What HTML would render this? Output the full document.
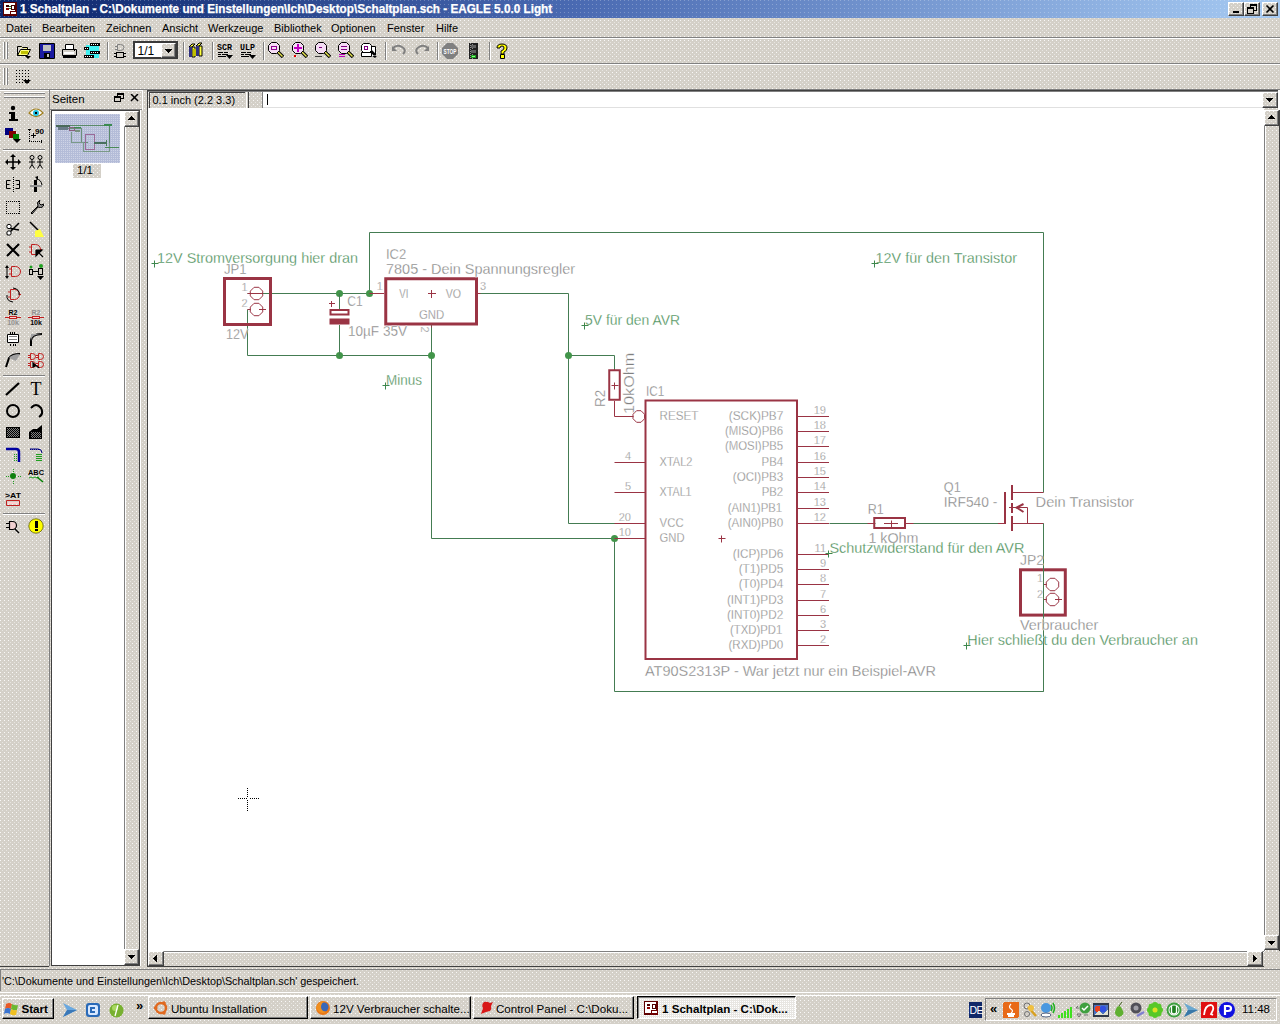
<!DOCTYPE html>
<html><head><meta charset="utf-8"><title>EAGLE</title>
<style>
*{margin:0;padding:0;box-sizing:border-box}
html,body{width:1280px;height:1024px;overflow:hidden;font-family:"Liberation Sans",sans-serif;font-size:11px;color:#000;position:relative}
body,.g,.btn{background-color:#d4d0c8;background-image:conic-gradient(from 270deg at 1px 1px,rgba(255,255,255,.85) 25%,transparent 0),conic-gradient(from 270deg at 1px 1px,rgba(255,255,255,.45) 25%,transparent 0);background-size:4px 4px,4px 4px;background-position:0 0,2px 2px}
.a{position:absolute}
.t{position:absolute;white-space:nowrap;line-height:1}
.btn{position:absolute;border-top:1px solid #fff;border-left:1px solid #fff;border-right:1px solid #404040;border-bottom:1px solid #404040;box-shadow:inset -1px -1px 0 #808080}
.sunk{position:absolute;border-top:1px solid #808080;border-left:1px solid #808080;border-right:1px solid #fff;border-bottom:1px solid #fff;box-shadow:inset 1px 1px 0 #404040}
</style></head><body>
<div class="a" style="left:0px;top:0px;width:1280px;height:18px;background:conic-gradient(from 270deg at 1px 1px,rgba(255,255,255,.25) 25%,transparent 0) 0 0/4px 4px,linear-gradient(to right,#0a246a 0%,#4a6ab2 45%,#a6caf2 100%);"></div><div class="t" style="left:20px;top:2.87px;font-size:12.2px;color:#fff;font-weight:bold;transform:scaleX(0.963);transform-origin:0 0;-webkit-text-stroke:0.25px #fff">1 Schaltplan - C:\Dokumente und Einstellungen\Ich\Desktop\Schaltplan.sch - EAGLE 5.0.0 Light</div><svg class="a" style="left:3px;top:2px" width="14" height="14" viewBox="0 0 14 14" shape-rendering="crispEdges"><rect x="0" y="0" width="14" height="14" fill="#5a0000"/><rect x="1" y="1" width="11" height="11" fill="#fff"/><rect x="3" y="3" width="3" height="2" fill="#400000"/><rect x="3" y="6" width="3" height="2" fill="#900000"/><rect x="6" y="4" width="2" height="1" fill="#2a7a2a"/><rect x="6" y="6" width="3" height="1" fill="#2a7a2a"/><rect x="8" y="3" width="4" height="5" fill="#400000"/><rect x="9" y="4" width="2" height="3" fill="#fff"/><rect x="7" y="9" width="7" height="5" fill="#600000"/><rect x="8" y="10" width="5" height="2" fill="#fff"/></svg><div class="btn" style="left:1228px;top:2px;width:16px;height:14px;"></div><div class="btn" style="left:1244px;top:2px;width:16px;height:14px;"></div><div class="btn" style="left:1262px;top:2px;width:16px;height:14px;"></div><svg class="a" style="left:1228px;top:2px" width="16" height="14" viewBox="0 0 16 14" shape-rendering="crispEdges"><rect x="5" y="9" width="6" height="2" fill="#000"/></svg><svg class="a" style="left:1244px;top:2px" width="16" height="14" viewBox="0 0 16 14" shape-rendering="crispEdges"><rect x="6" y="2" width="6" height="6" fill="none" stroke="#000" stroke-width="1" transform="translate(.5 .5)"/><rect x="6" y="2" width="6" height="1" fill="#000" transform="translate(.5 .5)"/><rect x="3.5" y="5.5" width="6" height="6" fill="#d4d0c8" stroke="#000"/><rect x="3" y="5" width="7" height="2" fill="#000"/></svg><svg class="a" style="left:1262px;top:2px" width="16" height="14" viewBox="0 0 16 14" shape-rendering="crispEdges"><path d="M4 3L11 10M11 3L4 10" stroke="#000" stroke-width="1.6" fill="none" shape-rendering="geometricPrecision" transform="translate(.5 .5)"/></svg><div class="t" style="left:6px;top:22.69px;font-size:11px;color:#000;">Datei</div><div class="t" style="left:42px;top:22.69px;font-size:11px;color:#000;">Bearbeiten</div><div class="t" style="left:106px;top:22.69px;font-size:11px;color:#000;">Zeichnen</div><div class="t" style="left:162px;top:22.69px;font-size:11px;color:#000;">Ansicht</div><div class="t" style="left:208px;top:22.69px;font-size:11px;color:#000;">Werkzeuge</div><div class="t" style="left:274px;top:22.69px;font-size:11px;color:#000;">Bibliothek</div><div class="t" style="left:331px;top:22.69px;font-size:11px;color:#000;">Optionen</div><div class="t" style="left:387px;top:22.69px;font-size:11px;color:#000;">Fenster</div><div class="t" style="left:436px;top:22.69px;font-size:11px;color:#000;">Hilfe</div><div class="a" style="left:0px;top:37px;width:1280px;height:1px;background:#808080;"></div><div class="a" style="left:0px;top:38px;width:1280px;height:1px;background:#fff;"></div><div class="a" style="left:0px;top:63px;width:1280px;height:1px;background:#808080;"></div><div class="a" style="left:0px;top:64px;width:1280px;height:1px;background:#fff;"></div><div class="a" style="left:0px;top:89px;width:1280px;height:1px;background:#808080;"></div><div class="a" style="left:3px;top:42px;width:1px;height:17px;background:#fff;"></div><div class="a" style="left:4px;top:42px;width:1px;height:17px;background:#808080;"></div><div class="a" style="left:6px;top:42px;width:1px;height:17px;background:#fff;"></div><div class="a" style="left:7px;top:42px;width:1px;height:17px;background:#808080;"></div><div class="a" style="left:3px;top:68px;width:1px;height:17px;background:#fff;"></div><div class="a" style="left:4px;top:68px;width:1px;height:17px;background:#808080;"></div><div class="a" style="left:6px;top:68px;width:1px;height:17px;background:#fff;"></div><div class="a" style="left:7px;top:68px;width:1px;height:17px;background:#808080;"></div><div class="a" style="left:107px;top:42px;width:1px;height:18px;background:#808080;"></div><div class="a" style="left:108px;top:42px;width:1px;height:18px;background:#fff;"></div><div class="a" style="left:183px;top:42px;width:1px;height:18px;background:#808080;"></div><div class="a" style="left:184px;top:42px;width:1px;height:18px;background:#fff;"></div><div class="a" style="left:212px;top:42px;width:1px;height:18px;background:#808080;"></div><div class="a" style="left:213px;top:42px;width:1px;height:18px;background:#fff;"></div><div class="a" style="left:263px;top:42px;width:1px;height:18px;background:#808080;"></div><div class="a" style="left:264px;top:42px;width:1px;height:18px;background:#fff;"></div><div class="a" style="left:385px;top:42px;width:1px;height:18px;background:#808080;"></div><div class="a" style="left:386px;top:42px;width:1px;height:18px;background:#fff;"></div><div class="a" style="left:437px;top:42px;width:1px;height:18px;background:#808080;"></div><div class="a" style="left:438px;top:42px;width:1px;height:18px;background:#fff;"></div><div class="a" style="left:489px;top:42px;width:1px;height:18px;background:#808080;"></div><div class="a" style="left:490px;top:42px;width:1px;height:18px;background:#fff;"></div><div class="a" style="left:133px;top:41px;width:45px;height:18px;background:#fff;border:2px solid #3a3a3a"></div><div class="btn" style="left:161px;top:43px;width:15px;height:15px;"></div><div class="t" style="left:137.5px;top:44.84px;font-size:12px;color:#000;">1/1</div><svg class="a" style="left:161px;top:43px" width="15" height="15" viewBox="0 0 15 15" shape-rendering="crispEdges"><path d="M4 6h7l-3.5 4z" fill="#000"/></svg>
<div class="a" style="left:49px;top:90px;width:1px;height:876px;background:#808080;"></div><div class="a" style="left:0px;top:90px;width:49px;height:1px;background:#fff;"></div><div class="a" style="left:4px;top:92px;width:41px;height:1px;background:#fff;"></div><div class="a" style="left:4px;top:93px;width:41px;height:1px;background:#808080;"></div><div class="a" style="left:4px;top:96px;width:41px;height:1px;background:#fff;"></div><div class="a" style="left:4px;top:97px;width:41px;height:1px;background:#808080;"></div><div class="a" style="left:3px;top:149px;width:42px;height:1px;background:#808080;"></div><div class="a" style="left:3px;top:150px;width:42px;height:1px;background:#fff;"></div><div class="a" style="left:3px;top:375px;width:42px;height:1px;background:#808080;"></div><div class="a" style="left:3px;top:376px;width:42px;height:1px;background:#fff;"></div><div class="a" style="left:3px;top:513px;width:42px;height:1px;background:#808080;"></div><div class="a" style="left:3px;top:514px;width:42px;height:1px;background:#fff;"></div><div class="a" style="left:50px;top:90px;width:93px;height:1px;background:#fff;"></div><div class="a" style="left:142px;top:90px;width:1px;height:20px;background:#fff;"></div><div class="t" style="left:52px;top:93.77px;font-size:11.5px;color:#000;">Seiten</div><svg class="a" style="left:114px;top:93px" width="10" height="10" viewBox="0 0 10 10" shape-rendering="crispEdges"><rect x="3.5" y="0.5" width="6" height="5" fill="none" stroke="#000"/><rect x="3" y="0" width="7" height="2" fill="#000"/><rect x="0.5" y="3.5" width="6" height="5" fill="#d4d0c8" stroke="#000"/><rect x="0" y="3" width="7" height="2" fill="#000"/></svg><svg class="a" style="left:130px;top:94px" width="9" height="8" viewBox="0 0 9 8" shape-rendering="crispEdges"><path d="M1 0L8 7M8 0L1 7" stroke="#000" stroke-width="1.5" shape-rendering="geometricPrecision"/></svg><div class="a" style="left:50px;top:109px;width:92px;height:1px;background:#808080;"></div><div class="a" style="left:51px;top:110px;width:89px;height:856px;background:#404040;"></div><div class="a" style="left:52px;top:111px;width:87px;height:854px;background:#fff;"></div><div class="a" style="left:140px;top:110px;width:1px;height:856px;background:#fff;"></div><div class="a" style="left:55px;top:114px;width:65px;height:49px;background:#b4bcd8;background-image:conic-gradient(from 270deg at 1px 1px,rgba(255,255,255,.35) 25%,transparent 0);background-size:2px 2px"></div><svg class="a" style="left:55px;top:114px" width="65" height="49" viewBox="0 0 65 49" shape-rendering="crispEdges"><g fill="none" stroke-width="1"><path d="M13.5 11.5h41v17" stroke="#5a8a6a"/><path d="M5 14.5h15M20 14.5h6.5v14h6" stroke="#6a9078"/><path d="M14.5 13.5h5v3h-5z" stroke="#8a6080"/><path d="M16.5 17.5v11h12v9h26v-9" stroke="#7a9a88"/><path d="M30.5 20.5h9v15h-9z" stroke="#9a6a98"/><path d="M39 28.5h12" stroke="#4a7060" stroke-width="2"/><path d="M51.5 26v6M54 33h10" stroke="#4a7a5a"/></g><rect x="1" y="11" width="14" height="2" fill="#4a6a5a"/><rect x="3" y="13" width="10" height="3" fill="#6a7a88"/><rect x="49" y="10" width="8" height="2" fill="#3a8a50"/><rect x="19" y="13" width="7" height="1" fill="#3a8a50"/><rect x="20" y="16" width="5" height="2" fill="#7a9080"/><rect x="50" y="33" width="14" height="1" fill="#4a8a58"/></svg><div class="a g" style="left:73px;top:164px;width:28px;height:14px;"></div><div class="t" style="left:77px;top:165.27px;font-size:11.5px;color:#000;">1/1</div><div class="a g" style="left:124px;top:111px;width:15px;height:854px;"></div><div class="a" style="left:124px;top:111px;width:1px;height:854px;background:#808080;"></div><div class="a" style="left:125px;top:111px;width:1px;height:854px;background:#fff;"></div><div class="btn" style="left:124px;top:111px;width:15px;height:16px;"></div><div class="btn" style="left:124px;top:949px;width:15px;height:16px;"></div><svg class="a" style="left:124px;top:111px" width="15" height="16" viewBox="0 0 15 16" shape-rendering="crispEdges"><path d="M4 9h7l-3.5-4z" fill="#000"/></svg><svg class="a" style="left:124px;top:949px" width="15" height="16" viewBox="0 0 15 16" shape-rendering="crispEdges"><path d="M4 6h7l-3.5 4z" fill="#000"/></svg><div class="a" style="left:147px;top:90px;width:1px;height:877px;background:#404040;"></div><div class="a" style="left:147px;top:90px;width:1133px;height:1px;background:#404040;"></div><div class="a" style="left:148px;top:91px;width:1132px;height:1px;background:#808080;"></div><div class="a g" style="left:149px;top:92px;width:96px;height:16px;border-left:1px solid #404040;border-top:1px solid #404040;"></div><div class="t" style="left:152.5px;top:94.69px;font-size:11px;color:#000;">0.1 inch (2.2 3.3)</div><div class="a" style="left:246px;top:92px;width:1px;height:16px;background:#fff;"></div><div class="a g" style="left:248px;top:92px;width:14px;height:16px;border-left:1px solid #404040;"></div><div class="a" style="left:262px;top:92px;width:1px;height:16px;background:#808080;"></div><div class="a" style="left:263px;top:92px;width:1000px;height:16px;background:#fff;"></div><div class="a" style="left:267px;top:94px;width:1px;height:11px;background:#000;"></div><div class="a" style="left:263px;top:107px;width:1000px;height:1px;background:#e0e0e0;"></div><div class="btn" style="left:1262px;top:92px;width:16px;height:16px;"></div><svg class="a" style="left:1262px;top:92px" width="16" height="16" viewBox="0 0 16 16" shape-rendering="crispEdges"><path d="M4 6h7l-3.5 4z" fill="#000"/></svg><div class="a" style="left:1278px;top:90px;width:2px;height:20px;background:#fff;"></div><div class="a" style="left:148px;top:108px;width:1116px;height:843px;background:#fff;"></div><div class="a g" style="left:1264px;top:110px;width:15px;height:841px;"></div><div class="a" style="left:1264px;top:110px;width:1px;height:841px;background:#808080;"></div><div class="a" style="left:1265px;top:110px;width:1px;height:841px;background:#fff;"></div><div class="a" style="left:1279px;top:110px;width:1px;height:857px;background:#404040;"></div><div class="btn" style="left:1264px;top:110px;width:15px;height:16px;"></div><div class="btn" style="left:1264px;top:935px;width:15px;height:15px;"></div><svg class="a" style="left:1264px;top:110px" width="15" height="16" viewBox="0 0 15 16" shape-rendering="crispEdges"><path d="M4 9h7l-3.5-4z" fill="#000"/></svg><svg class="a" style="left:1264px;top:935px" width="15" height="15" viewBox="0 0 15 15" shape-rendering="crispEdges"><path d="M4 6h7l-3.5 4z" fill="#000"/></svg><div class="a g" style="left:148px;top:951px;width:1116px;height:15px;"></div><div class="a" style="left:148px;top:951px;width:1116px;height:1px;background:#808080;"></div><div class="a" style="left:148px;top:952px;width:1116px;height:1px;background:#fff;"></div><div class="a" style="left:147px;top:966px;width:1117px;height:1px;background:#404040;"></div><div class="btn" style="left:148px;top:951px;width:16px;height:15px;"></div><div class="btn" style="left:1247px;top:951px;width:16px;height:15px;"></div><svg class="a" style="left:148px;top:951px" width="16" height="15" viewBox="0 0 16 15" shape-rendering="crispEdges"><path d="M9 4v7l-4-3.5z" fill="#000"/></svg><svg class="a" style="left:1247px;top:951px" width="16" height="15" viewBox="0 0 16 15" shape-rendering="crispEdges"><path d="M6 4v7l4-3.5z" fill="#000"/></svg><div class="a g" style="left:1264px;top:951px;width:16px;height:16px;"></div><div class="a" style="left:0px;top:966px;width:49px;height:1px;background:#404040;"></div><div class="a" style="left:0px;top:969px;width:1280px;height:1px;background:#808080;"></div><div class="a" style="left:0px;top:970px;width:1px;height:21px;background:#808080;"></div><div class="a" style="left:0px;top:992px;width:1280px;height:1px;background:#fff;"></div><div class="t" style="left:2px;top:976.36px;font-size:10.8px;color:#000;">'C:\Dokumente und Einstellungen\Ich\Desktop\Schaltplan.sch' gespeichert.</div><div class="a" style="left:0px;top:995px;width:1280px;height:1px;background:#fff;"></div>
<div class="btn" style="left:2px;top:998px;width:52px;height:21px;border-right-color:#000;border-bottom-color:#000"></div><div class="t" style="left:21.5px;top:1002.98px;font-size:11.6px;color:#000;font-weight:bold;">Start</div><svg class="a" style="left:4px;top:1001px" width="16" height="15" viewBox="0 0 16 15" shape-rendering="crispEdges"><g shape-rendering="geometricPrecision"><path d="M2 3q3-2 6 0l-1 5q-3-2-6 0z" fill="#e85a28"/><path d="M8 3q3 2 6 1l-1 5q-3 1-6-1z" fill="#6ab830"/><path d="M1 8q3-2 6 0l-1 5q-3-2-6 0z" fill="#3a74d0"/><path d="M7 8q3 2 6 1l-1 5q-3 1-6-1z" fill="#f0c020"/></g></svg><svg class="a" style="left:62px;top:1002px" width="16" height="16" viewBox="0 0 16 16" shape-rendering="crispEdges"><g shape-rendering="geometricPrecision"><path d="M1 1l14 7-14 7 4-7z" fill="#6aa8e0"/><path d="M5 8h10l-14 7z" fill="#3a78b8"/></g></svg><svg class="a" style="left:85px;top:1002px" width="16" height="16" viewBox="0 0 16 16" shape-rendering="crispEdges"><g shape-rendering="geometricPrecision"><rect x="1" y="1" width="14" height="14" rx="3" fill="#2a6ab8"/><rect x="3" y="3" width="10" height="10" rx="2" fill="#d8e8ff"/><path d="M5 5h5v2h-3v2h3v2h-5z" fill="#2a6ab8"/></g></svg><svg class="a" style="left:109px;top:1003px" width="15" height="15" viewBox="0 0 15 15" shape-rendering="crispEdges"><g shape-rendering="geometricPrecision"><circle cx="7.5" cy="7.5" r="7" fill="#78b030"/><circle cx="6" cy="5" r="3" fill="#a8d860"/><path d="M9 2l-3 11" stroke="#fff" stroke-width="1.3"/></g></svg><div class="t" style="left:136px;top:998.50px;font-size:13px;color:#000;font-weight:bold;">»</div><div class="btn" style="left:148px;top:996px;width:160px;height:23px;border-right-color:#000;border-bottom-color:#000"></div><div class="t" style="left:171px;top:1002.98px;font-size:11.6px;color:#000;">Ubuntu Installation</div><svg class="a" style="left:153px;top:1000px" width="16" height="16" viewBox="0 0 16 16" shape-rendering="crispEdges"><g shape-rendering="geometricPrecision"><circle cx="8" cy="8" r="5" fill="none" stroke="#e06a20" stroke-width="2.5"/><circle cx="2.5" cy="8" r="1.8" fill="#e06a20"/><circle cx="11" cy="3" r="1.8" fill="#e06a20"/><circle cx="11" cy="13" r="1.8" fill="#e06a20"/></g></svg><div class="btn" style="left:310px;top:996px;width:161px;height:23px;border-right-color:#000;border-bottom-color:#000"></div><div class="t" style="left:333px;top:1002.98px;font-size:11.6px;color:#000;">12V Verbraucher schalte...</div><svg class="a" style="left:315px;top:1000px" width="16" height="16" viewBox="0 0 16 16" shape-rendering="crispEdges"><g shape-rendering="geometricPrecision"><circle cx="8" cy="8" r="7" fill="#e87818"/><circle cx="9" cy="7" r="4.5" fill="#3a68b8"/><path d="M1 8q2-7 9-7q-4 2-4 6t5 5q-6 3-10-4z" fill="#f09020"/></g></svg><div class="btn" style="left:473px;top:996px;width:161px;height:23px;border-right-color:#000;border-bottom-color:#000"></div><div class="t" style="left:496px;top:1002.98px;font-size:11.6px;color:#000;">Control Panel - C:\Doku...</div><svg class="a" style="left:478px;top:1000px" width="16" height="16" viewBox="0 0 16 16" shape-rendering="crispEdges"><g shape-rendering="geometricPrecision"><path d="M3 14l2-6q-2-3 1-6q3-1 6 1l3-1-2 4q1 3-1 5l-4 1z" fill="#d81818"/></g></svg><div class="a" style="left:637px;top:996px;width:159px;height:23px;background:#e8e6e2;border-top:1px solid #000;border-left:1px solid #000;border-right:1px solid #fff;border-bottom:1px solid #fff;box-shadow:inset 1px 1px 0 #808080;background-image:conic-gradient(from 270deg at 1px 1px,#fff 25%,transparent 0);background-size:2px 2px"></div><div class="t" style="left:662px;top:1002.98px;font-size:11.6px;color:#000;font-weight:bold;">1 Schaltplan - C:\Dok...</div><svg class="a" style="left:643px;top:1000px" width="16" height="16" viewBox="0 0 16 16" shape-rendering="crispEdges"><rect x="1" y="1" width="14" height="14" fill="#600000"/><rect x="2" y="2" width="11" height="11" fill="#fff"/><rect x="4" y="4" width="3" height="2" fill="#500000"/><rect x="4" y="7" width="3" height="2" fill="#900000"/><rect x="9" y="4" width="4" height="5" fill="#500000"/><rect x="10" y="5" width="2" height="3" fill="#fff"/><rect x="8" y="10" width="7" height="5" fill="#700000"/><rect x="9" y="11" width="5" height="2" fill="#fff"/></svg><div class="a" style="left:969px;top:1002px;width:13px;height:16px;background:#102868;"></div><div class="t" style="left:969.5px;top:1005.11px;font-size:10.5px;color:#fff;letter-spacing:-0.6px;">DE</div><div class="a g" style="left:985px;top:998px;width:292px;height:23px;border-top:1px solid #808080;border-left:1px solid #808080;border-right:1px solid #fff;border-bottom:1px solid #fff"></div><div class="t" style="left:990px;top:1001.50px;font-size:13px;color:#000;font-weight:bold;">«</div><svg class="a" style="left:1003px;top:1002px" width="16" height="16" viewBox="0 0 16 16" shape-rendering="crispEdges"><rect x="0" y="0" width="16" height="16" rx="2" fill="#e86a18"/><path d="M4 12h8M5 14h6" stroke="#fff" stroke-width="1.2"/><path d="M8 2q-3 3 0 5t0 4" stroke="#fff" stroke-width="1.2" fill="none" shape-rendering="geometricPrecision"/></svg><svg class="a" style="left:1022px;top:1002px" width="16" height="16" viewBox="0 0 16 16" shape-rendering="crispEdges"><g shape-rendering="geometricPrecision"><circle cx="5" cy="4" r="3" fill="none" stroke="#707070"/><circle cx="5" cy="12" r="2.5" fill="none" stroke="#707070"/><path d="M6 5l8 9" stroke="#d8a020" stroke-width="2.5"/><circle cx="9" cy="6" r="3" fill="#f0c040"/></g></svg><svg class="a" style="left:1040px;top:1002px" width="16" height="16" viewBox="0 0 16 16" shape-rendering="crispEdges"><g shape-rendering="geometricPrecision"><circle cx="6" cy="6" r="5" fill="#4a98e0"/><ellipse cx="6" cy="13" rx="5" ry="2" fill="#fff" stroke="#506080"/><path d="M11 3q2 3 0 6M13 1q3 5 0 10" stroke="#20b020" stroke-width="1.5" fill="none"/></g></svg><svg class="a" style="left:1057px;top:1002px" width="16" height="16" viewBox="0 0 16 16" shape-rendering="crispEdges"><rect x="1" y="13" width="2" height="3" fill="#40e020"/><rect x="4" y="11" width="2" height="5" fill="#40e020"/><rect x="7" y="9" width="2" height="7" fill="#40e020"/><rect x="10" y="7" width="2" height="9" fill="#40e020"/><rect x="13" y="5" width="2" height="11" fill="#40e020"/></svg><svg class="a" style="left:1075px;top:1002px" width="16" height="16" viewBox="0 0 16 16" shape-rendering="crispEdges"><g shape-rendering="geometricPrecision"><circle cx="10" cy="6" r="5.5" fill="#40a040"/><path d="M7 6l2 2 4-4" stroke="#fff" stroke-width="1.5" fill="none"/><path d="M1 6h3M1 6l2-2M2 12h4l-2 3zM9 13h4" stroke="#707070" fill="none"/></g></svg><svg class="a" style="left:1093px;top:1002px" width="16" height="16" viewBox="0 0 16 16" shape-rendering="crispEdges"><rect x="0" y="1" width="16" height="14" fill="#303848"/><rect x="1" y="3" width="14" height="10" fill="#4a70c0"/><circle cx="5" cy="7" r="3" fill="#e84020"/><circle cx="10" cy="7" r="3" fill="#3050e0"/><path d="M1 13l5-4 4 3 5-4v5z" fill="#e0e0d0"/></svg><svg class="a" style="left:1113px;top:1002px" width="16" height="16" viewBox="0 0 16 16" shape-rendering="crispEdges"><g shape-rendering="geometricPrecision"><path d="M6 15q-6-2-3-8q1-3 3-3q2 0 3 3q4 6-3 8z" fill="#60b030"/><path d="M6 4l3-4" stroke="#406020"/></g></svg><svg class="a" style="left:1129px;top:1002px" width="16" height="16" viewBox="0 0 16 16" shape-rendering="crispEdges"><g shape-rendering="geometricPrecision"><circle cx="7" cy="6" r="5.5" fill="#505058"/><circle cx="7" cy="6" r="2.5" fill="#a0a0a8"/><path d="M8 14l7-4" stroke="#8080d0" stroke-width="2.5"/></g></svg><svg class="a" style="left:1147px;top:1002px" width="16" height="16" viewBox="0 0 16 16" shape-rendering="crispEdges"><g shape-rendering="geometricPrecision"><circle cx="13.0" cy="8.0" r="3" fill="#58c828"/><circle cx="11.5" cy="11.5" r="3" fill="#58c828"/><circle cx="8.0" cy="13.0" r="3" fill="#58c828"/><circle cx="4.5" cy="11.5" r="3" fill="#58c828"/><circle cx="3.0" cy="8.0" r="3" fill="#58c828"/><circle cx="4.5" cy="4.5" r="3" fill="#58c828"/><circle cx="8.0" cy="3.0" r="3" fill="#58c828"/><circle cx="11.5" cy="4.5" r="3" fill="#58c828"/><circle cx="8" cy="8" r="2.5" fill="#e0e020"/></g></svg><svg class="a" style="left:1166px;top:1002px" width="16" height="16" viewBox="0 0 16 16" shape-rendering="crispEdges"><g shape-rendering="geometricPrecision"><circle cx="8" cy="8" r="7.5" fill="#40a040"/><circle cx="8" cy="8" r="5.5" fill="#fff"/><circle cx="8" cy="8" r="4.5" fill="#208020"/><path d="M5.5 4v6q0 2 2.5 2t2.5-2v-6" stroke="#fff" stroke-width="1.3" fill="none"/></g></svg><svg class="a" style="left:1183px;top:1002px" width="16" height="16" viewBox="0 0 16 16" shape-rendering="crispEdges"><g shape-rendering="geometricPrecision"><path d="M1 1l14 7-14 7 4-7z" fill="#6aa8d0"/><path d="M5 8h10l-14 7z" fill="#3a78a8"/></g></svg><svg class="a" style="left:1201px;top:1002px" width="16" height="16" viewBox="0 0 16 16" shape-rendering="crispEdges"><rect x="0" y="0" width="16" height="16" fill="#e01010"/><path d="M3 13q1-10 7-10q3 1 2 5l-2 4 2 1" stroke="#fff" stroke-width="1.8" fill="none" shape-rendering="geometricPrecision"/></svg><svg class="a" style="left:1219px;top:1002px" width="16" height="16" viewBox="0 0 16 16" shape-rendering="crispEdges"><g shape-rendering="geometricPrecision"><circle cx="8" cy="8" r="8" fill="#1010e0"/><path d="M6 13V4h3q3 0 3 2.5t-3 2.5h-3" stroke="#fff" stroke-width="2.2" fill="none"/></g></svg><div class="t" style="left:1242px;top:1004.07px;font-size:11.5px;color:#000;">11:48</div>
<svg class="a" style="left:16px;top:43px" width="16" height="16" viewBox="0 0 16 16" font-family="Liberation Sans, sans-serif"><path d="M1.5 3.5h4l1 1h5v2" fill="#ffff80" stroke="#000" stroke-width="1" /><path d="M1.5 3.5v9h10l3-6h-10l-3 6" fill="#ffff80" stroke="#000" stroke-width="1" /><rect x="5" y="8" width="7" height="3" fill="#c0c000"/><path d="M9 13h6l-3 3z" fill="#000" stroke="none" stroke-width="1" /></svg><svg class="a" style="left:39px;top:43px" width="16" height="16" viewBox="0 0 16 16" font-family="Liberation Sans, sans-serif"><rect x="1" y="1" width="14" height="14" fill="#1a1aa0"/><rect x="4" y="2" width="8" height="6" fill="#c0c0c0"/><rect x="5" y="10" width="6" height="5" fill="#000"/><rect x="8" y="11" width="2" height="3" fill="#c0c0c0"/><path d="M0.5 0.5h15v15h-15z" fill="none" stroke="#000" stroke-width="1" /></svg><svg class="a" style="left:61px;top:43px" width="16" height="16" viewBox="0 0 16 16" font-family="Liberation Sans, sans-serif"><rect x="4" y="1" width="9" height="5" fill="#fff"/><path d="M4.5 1.5h8v5h-8z" fill="none" stroke="#000" stroke-width="1" /><rect x="1" y="6" width="15" height="7" fill="#d4d0c8"/><path d="M1.5 6.5h14v6h-14z" fill="none" stroke="#000" stroke-width="1" /><rect x="3" y="9" width="10" height="2" fill="#fff"/><rect x="2" y="13" width="13" height="2" fill="#000"/><rect x="13" y="7" width="1" height="1" fill="#000"/></svg><svg class="a" style="left:84px;top:43px" width="16" height="16" viewBox="0 0 16 16" font-family="Liberation Sans, sans-serif"><rect x="2" y="2" width="13" height="13" fill="#40f0f0"/><rect x="6" y="0" width="10" height="3" fill="#000"/><rect x="0" y="4" width="5" height="3" fill="#000"/><rect x="6" y="8" width="10" height="3" fill="#000"/><rect x="0" y="12" width="10" height="3" fill="#000"/><rect x="7" y="1" width="1" height="1" fill="#fff"/><rect x="9" y="1" width="1" height="1" fill="#fff"/><rect x="11" y="1" width="1" height="1" fill="#fff"/><rect x="13" y="1" width="1" height="1" fill="#fff"/><rect x="7" y="9" width="1" height="1" fill="#fff"/><rect x="9" y="9" width="1" height="1" fill="#fff"/><rect x="11" y="9" width="1" height="1" fill="#fff"/><rect x="13" y="9" width="1" height="1" fill="#fff"/><rect x="1" y="5" width="1" height="1" fill="#fff"/><rect x="3" y="5" width="1" height="1" fill="#fff"/><rect x="1" y="13" width="1" height="1" fill="#fff"/><rect x="3" y="13" width="1" height="1" fill="#fff"/><rect x="5" y="13" width="1" height="1" fill="#fff"/><rect x="7" y="13" width="1" height="1" fill="#fff"/></svg><svg class="a" style="left:114px;top:43px" width="16" height="16" viewBox="0 0 16 16" font-family="Liberation Sans, sans-serif"><path d="M1 3.5h2M1 6.5h2M3.5 1.5h3a3.5 3 0 0 1 0 6h-3z" fill="none" stroke="#808080" stroke-width="1" shape-rendering="geometricPrecision"/><rect x="2" y="9" width="8" height="6" fill="#000"/><rect x="3" y="10" width="6" height="4" fill="#d4d0c8"/><rect x="0" y="10" width="2" height="1" fill="#000"/><rect x="0" y="13" width="2" height="1" fill="#000"/><rect x="10" y="10" width="2" height="1" fill="#000"/><rect x="10" y="13" width="2" height="1" fill="#000"/></svg><svg class="a" style="left:188px;top:42px" width="16" height="16" viewBox="0 0 16 16" font-family="Liberation Sans, sans-serif"><path d="M1 5l3-3h3l-3 3zM4 5h3v10h-3z" fill="#ffff40" stroke="#000" stroke-width="1" /><rect x="1" y="5" width="3" height="10" fill="#303080"/><path d="M8 4l3-3h3l-3 3zM11 4h3v10h-3z" fill="#ffff40" stroke="#000" stroke-width="1" /><rect x="8" y="4" width="3" height="10" fill="#303080"/><rect x="5" y="7" width="3" height="7" fill="#c0c000"/></svg><svg class="a" style="left:217px;top:43px" width="16" height="16" viewBox="0 0 16 16" font-family="Liberation Sans, sans-serif"><text x="0" y="7" font-family="Liberation Mono" font-weight="bold" font-size="8.5" textLength="15" lengthAdjust="spacingAndGlyphs">SCR</text><rect x="1" y="9" width="5" height="1" fill="#000"/><rect x="7" y="9" width="4" height="1" fill="#000"/><rect x="1" y="11" width="3" height="1" fill="#000"/><rect x="5" y="11" width="6" height="1" fill="#000"/><rect x="1" y="13" width="8" height="1" fill="#000"/><path d="M9 12h7l-3.5 4z" fill="#000" stroke="none" stroke-width="1" /></svg><svg class="a" style="left:240px;top:43px" width="16" height="16" viewBox="0 0 16 16" font-family="Liberation Sans, sans-serif"><text x="0" y="7" font-family="Liberation Mono" font-weight="bold" font-size="8.5" textLength="15" lengthAdjust="spacingAndGlyphs">ULP</text><rect x="1" y="9" width="5" height="1" fill="#000"/><rect x="7" y="9" width="4" height="1" fill="#000"/><rect x="1" y="11" width="3" height="1" fill="#000"/><rect x="5" y="11" width="6" height="1" fill="#000"/><rect x="1" y="13" width="8" height="1" fill="#000"/><path d="M9 12h7l-3.5 4z" fill="#000" stroke="none" stroke-width="1" /></svg><svg class="a" style="left:268px;top:42px" width="16" height="16" viewBox="0 0 16 16" font-family="Liberation Sans, sans-serif"><path d="M9.5 9.5l5.5 5.5" fill="#000" stroke="#000" stroke-width="3.4" shape-rendering="geometricPrecision"/><path d="M9.5 9.5l5 5" fill="none" stroke="#e8e850" stroke-width="1.4" shape-rendering="geometricPrecision"/><path d="M3.5 0.5h5l3 3v5l-3 3h-5l-3-3v-5z" fill="#f4dcf4" stroke="#000" stroke-width="1" /><rect x="3" y="4" width="6" height="4" fill="#900090"/><rect x="4" y="5" width="4" height="2" fill="#f4dcf4"/></svg><svg class="a" style="left:292px;top:42px" width="16" height="16" viewBox="0 0 16 16" font-family="Liberation Sans, sans-serif"><path d="M9.5 9.5l5.5 5.5" fill="#000" stroke="#000" stroke-width="3.4" shape-rendering="geometricPrecision"/><path d="M9.5 9.5l5 5" fill="none" stroke="#e8e850" stroke-width="1.4" shape-rendering="geometricPrecision"/><path d="M3.5 0.5h5l3 3v5l-3 3h-5l-3-3v-5z" fill="#f4dcf4" stroke="#000" stroke-width="1" /><rect x="5" y="2" width="2" height="8" fill="#c000c0"/><rect x="2" y="5" width="8" height="2" fill="#c000c0"/><rect x="2" y="13" width="2" height="2" fill="#e00000"/></svg><svg class="a" style="left:315px;top:42px" width="16" height="16" viewBox="0 0 16 16" font-family="Liberation Sans, sans-serif"><path d="M9.5 9.5l5.5 5.5" fill="#000" stroke="#000" stroke-width="3.4" shape-rendering="geometricPrecision"/><path d="M9.5 9.5l5 5" fill="none" stroke="#e8e850" stroke-width="1.4" shape-rendering="geometricPrecision"/><path d="M3.5 0.5h5l3 3v5l-3 3h-5l-3-3v-5z" fill="#f4dcf4" stroke="#000" stroke-width="1" /><rect x="4" y="5" width="3" height="1" fill="#800080"/><rect x="0" y="14" width="7" height="1" fill="#404040"/></svg><svg class="a" style="left:338px;top:42px" width="16" height="16" viewBox="0 0 16 16" font-family="Liberation Sans, sans-serif"><path d="M9.5 9.5l5.5 5.5" fill="#000" stroke="#000" stroke-width="3.4" shape-rendering="geometricPrecision"/><path d="M9.5 9.5l5 5" fill="none" stroke="#e8e850" stroke-width="1.4" shape-rendering="geometricPrecision"/><path d="M3.5 0.5h5l3 3v5l-3 3h-5l-3-3v-5z" fill="#f4dcf4" stroke="#000" stroke-width="1" /><rect x="3" y="4" width="6" height="1" fill="#800080"/><rect x="3" y="7" width="6" height="1" fill="#800080"/><rect x="1" y="12" width="6" height="1" fill="#c000c0"/><rect x="1" y="14" width="6" height="1" fill="#c000c0"/></svg><svg class="a" style="left:361px;top:42px" width="16" height="16" viewBox="0 0 16 16" font-family="Liberation Sans, sans-serif"><path d="M2.5 1.5h6l2 2v5l-2 2h-6l-2-2v-5z" fill="#fff" stroke="#000" stroke-width="1" /><rect x="3" y="4" width="4" height="4" fill="#800080"/><rect x="4" y="5" width="2" height="2" fill="#fff"/><rect x="1" y="11" width="9" height="3" fill="#fff"/><path d="M0.5 10.5h10v4h-10z" fill="none" stroke="#000" stroke-width="1" /><rect x="11" y="5" width="4" height="9" fill="#fff"/><path d="M10.5 4.5h4v9" fill="none" stroke="#000" stroke-width="1" /><path d="M10 9l4 4" fill="#000" stroke="#000" stroke-width="2.5" shape-rendering="geometricPrecision"/><path d="M11 14h5l-2 2z" fill="#000" stroke="none" stroke-width="1" /></svg><svg class="a" style="left:391px;top:43px" width="16" height="16" viewBox="0 0 16 16" font-family="Liberation Sans, sans-serif"><path d="M2 5q4-4 9-1t1 7" fill="none" stroke="#808080" stroke-width="2" shape-rendering="geometricPrecision"/><path d="M1 3v5h5z" fill="#808080" stroke="none" stroke-width="1" /></svg><svg class="a" style="left:414px;top:43px" width="16" height="16" viewBox="0 0 16 16" font-family="Liberation Sans, sans-serif"><path d="M14 5q-4-4-9-1t-1 7" fill="none" stroke="#808080" stroke-width="2" shape-rendering="geometricPrecision"/><path d="M15 3v5h-5z" fill="#808080" stroke="none" stroke-width="1" /></svg><svg class="a" style="left:442px;top:43px" width="16" height="16" viewBox="0 0 16 16" font-family="Liberation Sans, sans-serif"><path d="M5 0h6l5 5v6l-5 5h-6l-5-5v-6z" fill="#808080" stroke="none" stroke-width="1" /><text x="8" y="11" text-anchor="middle" font-weight="bold" font-size="7.5" fill="#fff" textLength="13" lengthAdjust="spacingAndGlyphs">STOP</text></svg><svg class="a" style="left:494px;top:43px" width="16" height="16" viewBox="0 0 16 16" font-family="Liberation Sans, sans-serif"><path d="M3 5q0-4 5-4t5 4q0 3-3 4v2h-3v-3q3-1 3-3t-2-2t-2 2z" fill="#ffff00" stroke="#000" stroke-width="1" shape-rendering="geometricPrecision"/><rect x="7" y="12" width="3" height="3" fill="#ffff00"/><path d="M6.5 11.5h4v4h-4z" fill="none" stroke="#000" stroke-width="1" /></svg><svg class="a" style="left:469px;top:43px" width="9" height="16"><rect x="0" y="0" width="9" height="16" fill="#202020"/><rect x="1" y="0" width="1" height="1" fill="#909090"/><rect x="3" y="1" width="1" height="1" fill="#909090"/><rect x="1" y="2" width="1" height="1" fill="#909090"/><rect x="3" y="3" width="1" height="1" fill="#909090"/><rect x="1" y="4" width="1" height="1" fill="#909090"/><rect x="3" y="5" width="1" height="1" fill="#909090"/><rect x="1" y="6" width="1" height="1" fill="#909090"/><rect x="3" y="7" width="1" height="1" fill="#909090"/><rect x="1" y="8" width="1" height="1" fill="#909090"/><rect x="3" y="9" width="1" height="1" fill="#909090"/><rect x="1" y="10" width="1" height="1" fill="#909090"/><rect x="3" y="11" width="1" height="1" fill="#909090"/><rect x="1" y="12" width="1" height="1" fill="#909090"/><rect x="3" y="13" width="1" height="1" fill="#909090"/><rect x="1" y="14" width="1" height="1" fill="#909090"/><rect x="3" y="15" width="1" height="1" fill="#909090"/><rect x="2" y="2" width="5" height="3" fill="#606060"/><rect x="2" y="7" width="5" height="3" fill="#606060"/><rect x="2" y="12" width="5" height="3" fill="#20a020"/><rect x="3" y="13" width="3" height="1" fill="#80ff80"/></svg><svg class="a" style="left:15px;top:69px" width="16" height="16" viewBox="0 0 16 16" font-family="Liberation Sans, sans-serif"><rect x="1" y="1" width="1" height="1" fill="#000"/><rect x="1" y="4" width="1" height="1" fill="#000"/><rect x="1" y="7" width="1" height="1" fill="#000"/><rect x="1" y="10" width="1" height="1" fill="#000"/><rect x="1" y="13" width="1" height="1" fill="#000"/><rect x="4" y="1" width="1" height="1" fill="#000"/><rect x="4" y="4" width="1" height="1" fill="#000"/><rect x="4" y="7" width="1" height="1" fill="#000"/><rect x="4" y="10" width="1" height="1" fill="#000"/><rect x="4" y="13" width="1" height="1" fill="#000"/><rect x="7" y="1" width="1" height="1" fill="#000"/><rect x="7" y="4" width="1" height="1" fill="#000"/><rect x="7" y="7" width="1" height="1" fill="#000"/><rect x="7" y="10" width="1" height="1" fill="#000"/><rect x="7" y="13" width="1" height="1" fill="#000"/><rect x="10" y="1" width="1" height="1" fill="#000"/><rect x="10" y="4" width="1" height="1" fill="#000"/><rect x="10" y="7" width="1" height="1" fill="#000"/><rect x="10" y="10" width="1" height="1" fill="#000"/><rect x="10" y="13" width="1" height="1" fill="#000"/><rect x="13" y="1" width="1" height="1" fill="#000"/><rect x="13" y="4" width="1" height="1" fill="#000"/><rect x="13" y="7" width="1" height="1" fill="#000"/><rect x="13" y="10" width="1" height="1" fill="#000"/><rect x="13" y="13" width="1" height="1" fill="#000"/><path d="M8 11h8l-4 4z" fill="#000" stroke="none" stroke-width="1" /></svg><svg class="a" style="left:5px;top:105px" width="16" height="16" viewBox="0 0 16 16" font-family="Liberation Sans, sans-serif"><circle cx="8" cy="3" r="2.2" fill="#000"/><rect x="6" y="7" width="4" height="8" fill="#000"/><rect x="4" y="7" width="3" height="2" fill="#000"/><rect x="4" y="14" width="9" height="2" fill="#000"/></svg><svg class="a" style="left:28px;top:105px" width="16" height="16" viewBox="0 0 16 16" font-family="Liberation Sans, sans-serif"><path d="M1 8q7-8 14 0q-7 7-14 0z" fill="#fff" stroke="#a08020" stroke-width="1.2" shape-rendering="geometricPrecision"/><circle cx="8" cy="8" r="3" fill="#20c0e0"/><rect x="7" y="7" width="2" height="2" fill="#000"/></svg><svg class="a" style="left:5px;top:127px" width="16" height="16" viewBox="0 0 16 16" font-family="Liberation Sans, sans-serif"><rect x="0" y="1" width="8" height="7" fill="#000080"/><rect x="4" y="4" width="7" height="7" fill="#800000"/><rect x="8" y="7" width="6" height="5" fill="#008000"/><path d="M8 12h8l-4 4z" fill="#000" stroke="none" stroke-width="1" /></svg><svg class="a" style="left:28px;top:127px" width="16" height="16" viewBox="0 0 16 16" font-family="Liberation Sans, sans-serif"><rect x="1" y="3" width="1" height="1" fill="#000"/><rect x="1" y="5" width="1" height="1" fill="#000"/><rect x="1" y="7" width="1" height="1" fill="#000"/><rect x="1" y="9" width="1" height="1" fill="#000"/><rect x="1" y="11" width="1" height="1" fill="#000"/><rect x="1" y="13" width="1" height="1" fill="#000"/><rect x="0" y="2" width="3" height="1" fill="#000"/><rect x="1" y="14" width="1" height="1" fill="#000"/><rect x="3" y="14" width="1" height="1" fill="#000"/><rect x="5" y="14" width="1" height="1" fill="#000"/><rect x="7" y="14" width="1" height="1" fill="#000"/><rect x="9" y="14" width="1" height="1" fill="#000"/><rect x="11" y="14" width="1" height="1" fill="#000"/><rect x="13" y="14" width="1" height="1" fill="#000"/><rect x="13" y="13" width="1" height="3" fill="#000"/><rect x="5" y="6" width="1" height="5" fill="#000"/><rect x="3" y="8" width="5" height="1" fill="#000"/><text x="7" y="6.5" font-size="7" font-weight="bold" textLength="9" lengthAdjust="spacingAndGlyphs">90</text></svg><svg class="a" style="left:5px;top:154px" width="16" height="16" viewBox="0 0 16 16" font-family="Liberation Sans, sans-serif"><path d="M8 1v14M1 8h14" fill="#000" stroke="#000" stroke-width="1.6" /><path d="M8 0l-3 3h6zM8 16l-3-3h6zM0 8l3-3v6zM16 8l-3-3v6z" fill="#000" stroke="none" stroke-width="1" /></svg><svg class="a" style="left:28px;top:154px" width="16" height="16" viewBox="0 0 16 16" font-family="Liberation Sans, sans-serif"><circle cx="4" cy="3.5" r="2" fill="none" stroke="#000"/><path d="M4 5.5v5M1 8h6M4 10.5l-2.5 4M4 10.5l2.5 4" fill="none" stroke="#000" stroke-width="1" shape-rendering="geometricPrecision"/><circle cx="12" cy="3.5" r="2" fill="none" stroke="#000"/><path d="M12 5.5v5M9 8h6M12 10.5l-2.5 4M12 10.5l2.5 4" fill="none" stroke="#000" stroke-width="1" shape-rendering="geometricPrecision"/></svg><svg class="a" style="left:5px;top:176px" width="16" height="16" viewBox="0 0 16 16" font-family="Liberation Sans, sans-serif"><path d="M1.5 4.5h4M1.5 4.5v8h4M1.5 8.5h3M10.5 4.5h4v8h-4M11.5 8.5h3" fill="none" stroke="#000" stroke-width="1" /><rect x="8" y="1" width="1" height="1" fill="#000"/><rect x="8" y="3" width="1" height="1" fill="#000"/><rect x="8" y="5" width="1" height="1" fill="#000"/><rect x="8" y="7" width="1" height="1" fill="#000"/><rect x="8" y="9" width="1" height="1" fill="#000"/><rect x="8" y="11" width="1" height="1" fill="#000"/><rect x="8" y="13" width="1" height="1" fill="#000"/><rect x="8" y="15" width="1" height="1" fill="#000"/></svg><svg class="a" style="left:28px;top:176px" width="16" height="16" viewBox="0 0 16 16" font-family="Liberation Sans, sans-serif"><rect x="6" y="4" width="3" height="12" fill="#000"/><rect x="2" y="9" width="12" height="2" fill="#909090"/><path d="M8 3q5 0 6 6" fill="none" stroke="#000" stroke-width="1" shape-rendering="geometricPrecision"/><path d="M7 1l3-1v4z" fill="#000" stroke="none" stroke-width="1" /></svg><svg class="a" style="left:5px;top:199px" width="16" height="16" viewBox="0 0 16 16" font-family="Liberation Sans, sans-serif"><rect x="1" y="2" width="1" height="1" fill="#000"/><rect x="1" y="14" width="1" height="1" fill="#000"/><rect x="3" y="2" width="1" height="1" fill="#000"/><rect x="3" y="14" width="1" height="1" fill="#000"/><rect x="5" y="2" width="1" height="1" fill="#000"/><rect x="5" y="14" width="1" height="1" fill="#000"/><rect x="7" y="2" width="1" height="1" fill="#000"/><rect x="7" y="14" width="1" height="1" fill="#000"/><rect x="9" y="2" width="1" height="1" fill="#000"/><rect x="9" y="14" width="1" height="1" fill="#000"/><rect x="11" y="2" width="1" height="1" fill="#000"/><rect x="11" y="14" width="1" height="1" fill="#000"/><rect x="13" y="2" width="1" height="1" fill="#000"/><rect x="13" y="14" width="1" height="1" fill="#000"/><rect x="1" y="2" width="1" height="1" fill="#000"/><rect x="14" y="2" width="1" height="1" fill="#000"/><rect x="1" y="4" width="1" height="1" fill="#000"/><rect x="14" y="4" width="1" height="1" fill="#000"/><rect x="1" y="6" width="1" height="1" fill="#000"/><rect x="14" y="6" width="1" height="1" fill="#000"/><rect x="1" y="8" width="1" height="1" fill="#000"/><rect x="14" y="8" width="1" height="1" fill="#000"/><rect x="1" y="10" width="1" height="1" fill="#000"/><rect x="14" y="10" width="1" height="1" fill="#000"/><rect x="1" y="12" width="1" height="1" fill="#000"/><rect x="14" y="12" width="1" height="1" fill="#000"/><rect x="1" y="14" width="1" height="1" fill="#000"/><rect x="14" y="14" width="1" height="1" fill="#000"/><rect x="14" y="14" width="1" height="1" fill="#000"/></svg><svg class="a" style="left:28px;top:199px" width="16" height="16" viewBox="0 0 16 16" font-family="Liberation Sans, sans-serif"><path d="M3 14l7-7q-2-4 2-6l-1 3 2 2 3-1q-1 5-6 3l-6 7z" fill="#909090" stroke="#000" stroke-width="1" shape-rendering="geometricPrecision"/></svg><svg class="a" style="left:5px;top:221px" width="16" height="16" viewBox="0 0 16 16" font-family="Liberation Sans, sans-serif"><path d="M2 14l12-12M3 7l11 2" fill="none" stroke="#000" stroke-width="1.5" shape-rendering="geometricPrecision"/><circle cx="4" cy="12" r="2.2" fill="#fff" stroke="#000"/><circle cx="4" cy="5.5" r="2.2" fill="#fff" stroke="#000"/></svg><svg class="a" style="left:28px;top:221px" width="16" height="16" viewBox="0 0 16 16" font-family="Liberation Sans, sans-serif"><path d="M2 1l9 9" fill="none" stroke="#000" stroke-width="1.5" shape-rendering="geometricPrecision"/><path d="M7 10l5-2 4 8h-9z" fill="#ffff40" stroke="none" stroke-width="1" /></svg><svg class="a" style="left:5px;top:242px" width="16" height="16" viewBox="0 0 16 16" font-family="Liberation Sans, sans-serif"><path d="M2 2l12 12M14 2l-12 12" fill="none" stroke="#000" stroke-width="2.2" shape-rendering="geometricPrecision"/></svg><svg class="a" style="left:28px;top:242px" width="16" height="16" viewBox="0 0 16 16" font-family="Liberation Sans, sans-serif"><path d="M3.5 2.5h4a5 5 0 0 1 0 10h-4zM1 5h2.5M1 10h2.5M12 7.5h2" fill="none" stroke="#c02020" stroke-width="1" shape-rendering="geometricPrecision"/><path d="M8 8l7 7M8 8v6l2-2zM8 8h6l-2 2z" fill="#000" stroke="#000" stroke-width="1.2" shape-rendering="geometricPrecision"/></svg><svg class="a" style="left:5px;top:264px" width="16" height="16" viewBox="0 0 16 16" font-family="Liberation Sans, sans-serif"><path d="M6.5 2.5h4a5 5 0 0 1 0 10h-4zM4 5h2.5M4 10h2.5M15 7.5h2" fill="none" stroke="#c02020" stroke-width="1" shape-rendering="geometricPrecision"/><path d="M2 3v10" fill="#000" stroke="#000" stroke-width="1" /><path d="M2 1l-2 3h4zM2 15l-2-3h4z" fill="#000" stroke="none" stroke-width="1" /></svg><svg class="a" style="left:28px;top:264px" width="16" height="16" viewBox="0 0 16 16" font-family="Liberation Sans, sans-serif"><circle cx="3" cy="3" r="1.5" fill="#20a020"/><circle cx="13" cy="2" r="2" fill="#20a020"/><rect x="1" y="5" width="4" height="6" fill="#000"/><rect x="2" y="6" width="2" height="4" fill="#d4d0c8"/><rect x="10" y="4" width="5" height="7" fill="#000"/><rect x="11" y="5" width="3" height="5" fill="#d4d0c8"/><rect x="5" y="7" width="5" height="1" fill="#000"/><path d="M9 12h7l-3.5 4z" fill="#000" stroke="none" stroke-width="1" /></svg><svg class="a" style="left:5px;top:287px" width="16" height="16" viewBox="0 0 16 16" font-family="Liberation Sans, sans-serif"><path d="M5.5 2.5h4a5 5 0 0 1 0 10h-4zM3 5h2.5M3 10h2.5M14 7.5h2" fill="none" stroke="#c02020" stroke-width="1" shape-rendering="geometricPrecision"/><path d="M2 8q-1 6 6 7M14 8q1-6-6-7" fill="none" stroke="#000" stroke-width="1" shape-rendering="geometricPrecision"/></svg><svg class="a" style="left:5px;top:309px" width="16" height="16" viewBox="0 0 16 16" font-family="Liberation Sans, sans-serif"><text x="8" y="6" text-anchor="middle" font-size="7" font-weight="bold" fill="#000">R2</text><rect x="0" y="8" width="16" height="1" fill="#c02020"/><rect x="4" y="7" width="8" height="3" fill="#c02020"/><rect x="5" y="8" width="6" height="1" fill="#ffd0d0"/><text x="8" y="16" text-anchor="middle" font-size="7" font-weight="bold" fill="#909090">10k</text></svg><svg class="a" style="left:28px;top:309px" width="16" height="16" viewBox="0 0 16 16" font-family="Liberation Sans, sans-serif"><text x="8" y="6" text-anchor="middle" font-size="7" font-weight="bold" fill="#909090">R2</text><rect x="0" y="8" width="16" height="1" fill="#c02020"/><rect x="4" y="7" width="8" height="3" fill="#c02020"/><rect x="5" y="8" width="6" height="1" fill="#ffd0d0"/><text x="8" y="16" text-anchor="middle" font-size="7" font-weight="bold" fill="#000">10k</text></svg><svg class="a" style="left:5px;top:331px" width="16" height="16" viewBox="0 0 16 16" font-family="Liberation Sans, sans-serif"><rect x="2" y="3" width="12" height="9" fill="#fff"/><path d="M2.5 3.5h11v8h-11z" fill="none" stroke="#000" stroke-width="1" /><rect x="4" y="5" width="8" height="1" fill="#808080"/><rect x="4" y="8" width="8" height="1" fill="#808080"/><rect x="5" y="1" width="1" height="2" fill="#000"/><rect x="7" y="1" width="1" height="2" fill="#000"/><rect x="9" y="1" width="1" height="2" fill="#000"/><rect x="5" y="13" width="1" height="2" fill="#000"/><rect x="8" y="13" width="1" height="2" fill="#000"/><rect x="10" y="13" width="1" height="2" fill="#000"/></svg><svg class="a" style="left:28px;top:331px" width="16" height="16" viewBox="0 0 16 16" font-family="Liberation Sans, sans-serif"><path d="M3 15v-5q0-7 11-7" fill="none" stroke="#000" stroke-width="2" shape-rendering="geometricPrecision"/><path d="M3 10q0-7 11-7h-11z" fill="#a0a0a0" stroke="none" stroke-width="1" /></svg><svg class="a" style="left:5px;top:352px" width="16" height="16" viewBox="0 0 16 16" font-family="Liberation Sans, sans-serif"><path d="M1 15l3-9q3-4 11-4" fill="none" stroke="#000" stroke-width="2" shape-rendering="geometricPrecision"/><path d="M4 6q3-4 11-4l-4 7z" fill="#a0a0a0" stroke="none" stroke-width="1" /></svg><svg class="a" style="left:28px;top:352px" width="16" height="16" viewBox="0 0 16 16" font-family="Liberation Sans, sans-serif"><path d="M2.5 1.5h2a3 3 0 0 1 0 6h-2zM0 3.5h2.5M0 5.5h2.5" fill="none" stroke="#c02020" stroke-width="1" shape-rendering="geometricPrecision"/><path d="M10.5 1.5h2a3 3 0 0 1 0 6h-2zM8 3.5h2.5M8 5.5h2.5" fill="none" stroke="#c02020" stroke-width="1" shape-rendering="geometricPrecision"/><path d="M2.5 9.5h2a3 3 0 0 1 0 6h-2zM0 11.5h2.5M0 13.5h2.5" fill="none" stroke="#c02020" stroke-width="1" shape-rendering="geometricPrecision"/><path d="M10.5 9.5h2a3 3 0 0 1 0 6h-2zM8 11.5h2.5M8 13.5h2.5" fill="none" stroke="#c02020" stroke-width="1" shape-rendering="geometricPrecision"/><path d="M5 11l6 5M5 11v4l2-1z" fill="#000" stroke="#000" stroke-width="1.2" shape-rendering="geometricPrecision"/></svg><svg class="a" style="left:5px;top:381px" width="16" height="16" viewBox="0 0 16 16" font-family="Liberation Sans, sans-serif"><path d="M1 14L14 2" fill="none" stroke="#000" stroke-width="2.2" shape-rendering="geometricPrecision"/></svg><svg class="a" style="left:28px;top:381px" width="16" height="16" viewBox="0 0 16 16" font-family="Liberation Sans, sans-serif"><text x="8" y="14" text-anchor="middle" font-family="Liberation Serif" font-size="18">T</text></svg><svg class="a" style="left:5px;top:403px" width="16" height="16" viewBox="0 0 16 16" font-family="Liberation Sans, sans-serif"><circle cx="8" cy="8" r="6" fill="none" stroke="#000" stroke-width="2"/></svg><svg class="a" style="left:28px;top:403px" width="16" height="16" viewBox="0 0 16 16" font-family="Liberation Sans, sans-serif"><path d="M3 5q5-6 10 0q3 6-2 9" fill="none" stroke="#000" stroke-width="2" shape-rendering="geometricPrecision"/></svg><svg class="a" style="left:5px;top:424px" width="16" height="16" viewBox="0 0 16 16" font-family="Liberation Sans, sans-serif"><rect x="1" y="3" width="14" height="11" fill="#000"/><rect x="2" y="4" width="1" height="1" fill="#808080"/><rect x="3" y="5" width="1" height="1" fill="#808080"/><rect x="2" y="6" width="1" height="1" fill="#808080"/><rect x="3" y="7" width="1" height="1" fill="#808080"/><rect x="2" y="8" width="1" height="1" fill="#808080"/><rect x="3" y="9" width="1" height="1" fill="#808080"/><rect x="2" y="10" width="1" height="1" fill="#808080"/><rect x="3" y="11" width="1" height="1" fill="#808080"/><rect x="2" y="12" width="1" height="1" fill="#808080"/><rect x="4" y="4" width="1" height="1" fill="#808080"/><rect x="5" y="5" width="1" height="1" fill="#808080"/><rect x="4" y="6" width="1" height="1" fill="#808080"/><rect x="5" y="7" width="1" height="1" fill="#808080"/><rect x="4" y="8" width="1" height="1" fill="#808080"/><rect x="5" y="9" width="1" height="1" fill="#808080"/><rect x="4" y="10" width="1" height="1" fill="#808080"/><rect x="5" y="11" width="1" height="1" fill="#808080"/><rect x="4" y="12" width="1" height="1" fill="#808080"/><rect x="6" y="4" width="1" height="1" fill="#808080"/><rect x="7" y="5" width="1" height="1" fill="#808080"/><rect x="6" y="6" width="1" height="1" fill="#808080"/><rect x="7" y="7" width="1" height="1" fill="#808080"/><rect x="6" y="8" width="1" height="1" fill="#808080"/><rect x="7" y="9" width="1" height="1" fill="#808080"/><rect x="6" y="10" width="1" height="1" fill="#808080"/><rect x="7" y="11" width="1" height="1" fill="#808080"/><rect x="6" y="12" width="1" height="1" fill="#808080"/><rect x="8" y="4" width="1" height="1" fill="#808080"/><rect x="9" y="5" width="1" height="1" fill="#808080"/><rect x="8" y="6" width="1" height="1" fill="#808080"/><rect x="9" y="7" width="1" height="1" fill="#808080"/><rect x="8" y="8" width="1" height="1" fill="#808080"/><rect x="9" y="9" width="1" height="1" fill="#808080"/><rect x="8" y="10" width="1" height="1" fill="#808080"/><rect x="9" y="11" width="1" height="1" fill="#808080"/><rect x="8" y="12" width="1" height="1" fill="#808080"/><rect x="10" y="4" width="1" height="1" fill="#808080"/><rect x="11" y="5" width="1" height="1" fill="#808080"/><rect x="10" y="6" width="1" height="1" fill="#808080"/><rect x="11" y="7" width="1" height="1" fill="#808080"/><rect x="10" y="8" width="1" height="1" fill="#808080"/><rect x="11" y="9" width="1" height="1" fill="#808080"/><rect x="10" y="10" width="1" height="1" fill="#808080"/><rect x="11" y="11" width="1" height="1" fill="#808080"/><rect x="10" y="12" width="1" height="1" fill="#808080"/><rect x="12" y="4" width="1" height="1" fill="#808080"/><rect x="13" y="5" width="1" height="1" fill="#808080"/><rect x="12" y="6" width="1" height="1" fill="#808080"/><rect x="13" y="7" width="1" height="1" fill="#808080"/><rect x="12" y="8" width="1" height="1" fill="#808080"/><rect x="13" y="9" width="1" height="1" fill="#808080"/><rect x="12" y="10" width="1" height="1" fill="#808080"/><rect x="13" y="11" width="1" height="1" fill="#808080"/><rect x="12" y="12" width="1" height="1" fill="#808080"/></svg><svg class="a" style="left:28px;top:424px" width="16" height="16" viewBox="0 0 16 16" font-family="Liberation Sans, sans-serif"><path d="M1 15V8l4-3h4l5-4v14z" fill="#000" stroke="none" stroke-width="1" /><rect x="3" y="8" width="1" height="1" fill="#808080"/><rect x="4" y="9" width="1" height="1" fill="#808080"/><rect x="3" y="10" width="1" height="1" fill="#808080"/><rect x="4" y="11" width="1" height="1" fill="#808080"/><rect x="3" y="12" width="1" height="1" fill="#808080"/><rect x="4" y="13" width="1" height="1" fill="#808080"/><rect x="5" y="8" width="1" height="1" fill="#808080"/><rect x="6" y="9" width="1" height="1" fill="#808080"/><rect x="5" y="10" width="1" height="1" fill="#808080"/><rect x="6" y="11" width="1" height="1" fill="#808080"/><rect x="5" y="12" width="1" height="1" fill="#808080"/><rect x="6" y="13" width="1" height="1" fill="#808080"/><rect x="7" y="8" width="1" height="1" fill="#808080"/><rect x="8" y="9" width="1" height="1" fill="#808080"/><rect x="7" y="10" width="1" height="1" fill="#808080"/><rect x="8" y="11" width="1" height="1" fill="#808080"/><rect x="7" y="12" width="1" height="1" fill="#808080"/><rect x="8" y="13" width="1" height="1" fill="#808080"/><rect x="9" y="8" width="1" height="1" fill="#808080"/><rect x="10" y="9" width="1" height="1" fill="#808080"/><rect x="9" y="10" width="1" height="1" fill="#808080"/><rect x="10" y="11" width="1" height="1" fill="#808080"/><rect x="9" y="12" width="1" height="1" fill="#808080"/><rect x="10" y="13" width="1" height="1" fill="#808080"/><rect x="11" y="8" width="1" height="1" fill="#808080"/><rect x="12" y="9" width="1" height="1" fill="#808080"/><rect x="11" y="10" width="1" height="1" fill="#808080"/><rect x="12" y="11" width="1" height="1" fill="#808080"/><rect x="11" y="12" width="1" height="1" fill="#808080"/><rect x="12" y="13" width="1" height="1" fill="#808080"/></svg><svg class="a" style="left:5px;top:447px" width="16" height="16" viewBox="0 0 16 16" font-family="Liberation Sans, sans-serif"><path d="M1 2h10q3 0 3 3v10" fill="none" stroke="#0000a0" stroke-width="2.5" shape-rendering="geometricPrecision"/><rect x="9" y="7" width="1" height="1" fill="#20a020"/><rect x="9" y="9" width="1" height="1" fill="#20a020"/><rect x="9" y="11" width="1" height="1" fill="#20a020"/><rect x="9" y="13" width="1" height="1" fill="#20a020"/><rect x="11" y="7" width="1" height="1" fill="#20a020"/><rect x="11" y="9" width="1" height="1" fill="#20a020"/><rect x="11" y="11" width="1" height="1" fill="#20a020"/><rect x="11" y="13" width="1" height="1" fill="#20a020"/></svg><svg class="a" style="left:28px;top:447px" width="16" height="16" viewBox="0 0 16 16" font-family="Liberation Sans, sans-serif"><rect x="2" y="2" width="1" height="1" fill="#000080"/><rect x="4" y="2" width="1" height="1" fill="#000080"/><rect x="6" y="2" width="1" height="1" fill="#000080"/><rect x="8" y="2" width="1" height="1" fill="#000080"/><rect x="10" y="2" width="1" height="1" fill="#000080"/><path d="M2 2h8q4 0 4 4" fill="none" stroke="#000080" stroke-width="1" shape-rendering="geometricPrecision"/><rect x="8" y="7" width="6" height="1" fill="#20a020"/><rect x="8" y="9" width="6" height="1" fill="#20a020"/><rect x="8" y="11" width="6" height="1" fill="#20a020"/><rect x="8" y="13" width="6" height="1" fill="#20a020"/></svg><svg class="a" style="left:5px;top:468px" width="16" height="16" viewBox="0 0 16 16" font-family="Liberation Sans, sans-serif"><circle cx="8" cy="8" r="3" fill="#108010"/><rect x="8" y="1" width="1" height="1" fill="#20a020"/><rect x="8" y="3" width="1" height="1" fill="#20a020"/><rect x="8" y="13" width="1" height="1" fill="#20a020"/><rect x="8" y="15" width="1" height="1" fill="#20a020"/><rect x="1" y="8" width="1" height="1" fill="#20a020"/><rect x="3" y="8" width="1" height="1" fill="#20a020"/><rect x="13" y="8" width="1" height="1" fill="#20a020"/><rect x="15" y="8" width="1" height="1" fill="#20a020"/></svg><svg class="a" style="left:28px;top:468px" width="16" height="16" viewBox="0 0 16 16" font-family="Liberation Sans, sans-serif"><text x="0" y="7" font-size="8" font-weight="bold" textLength="16" lengthAdjust="spacingAndGlyphs">ABC</text><path d="M1 10l2-1 2 1 2-1 2 1 2-1" fill="none" stroke="#20a020" stroke-width="1" shape-rendering="geometricPrecision"/><path d="M9 9l6 5" fill="none" stroke="#008000" stroke-width="1.5" shape-rendering="geometricPrecision"/></svg><svg class="a" style="left:5px;top:491px" width="16" height="16" viewBox="0 0 16 16" font-family="Liberation Sans, sans-serif"><text x="0" y="7" font-size="8" font-weight="bold" textLength="16" lengthAdjust="spacingAndGlyphs">&gt;AT</text><path d="M1.5 9.5h13v5h-13z" fill="none" stroke="#c02020" stroke-width="1" /><rect x="3" y="11" width="10" height="2" fill="#ffd0d0"/></svg><svg class="a" style="left:5px;top:518px" width="16" height="16" viewBox="0 0 16 16" font-family="Liberation Sans, sans-serif"><path d="M4.5 3.5h3a4 4 0 0 1 0 8h-3zM1 5.5h3.5M1 9.5h3.5" fill="#f0d0d0" stroke="#000" stroke-width="1.2" shape-rendering="geometricPrecision"/><path d="M10 11l4 4" fill="none" stroke="#000" stroke-width="1.5" shape-rendering="geometricPrecision"/></svg><svg class="a" style="left:28px;top:518px" width="16" height="16" viewBox="0 0 16 16" font-family="Liberation Sans, sans-serif"><circle cx="8" cy="8" r="7.2" fill="#ffff00" stroke="#606000" stroke-width="0.8"/><rect x="7" y="3" width="3" height="7" fill="#000"/><rect x="7" y="11" width="3" height="2" fill="#000"/></svg>

<svg class="a" style="left:0;top:0;z-index:110" width="1280" height="1024" font-family="Liberation Sans, sans-serif"><polyline points="369.5,293.5 369.5,232.5 1043.5,232.5 1043.5,492.5" fill="none" stroke="#447c52" stroke-width="1" stroke-linejoin="miter"/><polyline points="247.5,293.5 369.5,293.5" fill="none" stroke="#447c52" stroke-width="1" stroke-linejoin="miter"/><polyline points="247.5,309.5 247.5,355.5 431.5,355.5" fill="none" stroke="#447c52" stroke-width="1" stroke-linejoin="miter"/><polyline points="431.5,324.5 431.5,355.5 431.5,538.5 645.5,538.5" fill="none" stroke="#447c52" stroke-width="1" stroke-linejoin="miter"/><polyline points="477.5,293.5 568.5,293.5 568.5,523.5 645.5,523.5" fill="none" stroke="#447c52" stroke-width="1" stroke-linejoin="miter"/><polyline points="568.5,355.5 614.5,355.5 614.5,370.5" fill="none" stroke="#447c52" stroke-width="1" stroke-linejoin="miter"/><polyline points="614.5,538.5 614.5,691.5 1043.5,691.5 1043.5,523.5" fill="none" stroke="#447c52" stroke-width="1" stroke-linejoin="miter"/><polyline points="829.5,523.5 875.5,523.5" fill="none" stroke="#447c52" stroke-width="1" stroke-linejoin="miter"/><polyline points="905.5,523.5 1005.5,523.5" fill="none" stroke="#447c52" stroke-width="1" stroke-linejoin="miter"/><circle cx="339.5" cy="293.5" r="3.5" fill="#42954a"/><circle cx="369.5" cy="293.5" r="3.5" fill="#42954a"/><circle cx="339.5" cy="355.5" r="3.5" fill="#42954a"/><circle cx="431.5" cy="355.5" r="3.5" fill="#42954a"/><circle cx="568.5" cy="355.5" r="3.5" fill="#42954a"/><circle cx="614.5" cy="538.5" r="3.5" fill="#42954a"/><rect x="224.5" y="278.5" width="46" height="46" fill="none" stroke="#9a3444" stroke-width="3"/><polygon points="254.1,287.3 258.9,287.3 262.7,291.1 262.7,295.9 258.9,299.7 254.1,299.7 250.3,295.9 250.3,291.1" fill="none" stroke="#9a3444" stroke-width="1"/><polygon points="254.1,303.3 258.9,303.3 262.7,307.1 262.7,311.9 258.9,315.7 254.1,315.7 250.3,311.9 250.3,307.1" fill="none" stroke="#9a3444" stroke-width="1"/><line x1="247.5" y1="293.5" x2="262.0" y2="293.5" stroke="#9a3444" stroke-width="1"/><line x1="247.5" y1="309.5" x2="250.5" y2="309.5" stroke="#9a3444" stroke-width="1"/><line x1="259.0" y1="309.5" x2="266.0" y2="309.5" stroke="#9a3444" stroke-width="1"/><text x="241.5" y="290.5" font-size="11" fill="#808080" stroke="#fff" stroke-width="0.3">1</text><text x="241.5" y="306.5" font-size="11" fill="#808080" stroke="#fff" stroke-width="0.3">2</text><rect x="330.5" y="310" width="18" height="4.5" fill="none" stroke="#9a3444" stroke-width="2"/><rect x="329.5" y="318.5" width="20" height="6" fill="#9a3444"/><line x1="339.5" y1="293.5" x2="339.5" y2="309.0" stroke="#447c52" stroke-width="1"/><line x1="339.5" y1="325.0" x2="339.5" y2="355.5" stroke="#447c52" stroke-width="1"/><line x1="329.0" y1="303.5" x2="335.0" y2="303.5" stroke="#9a3444" stroke-width="1"/><line x1="331.5" y1="301.0" x2="331.5" y2="307.0" stroke="#9a3444" stroke-width="1"/><rect x="385.75" y="278.75" width="90.75" height="45.25" fill="none" stroke="#9a3444" stroke-width="3"/><line x1="369.5" y1="293.5" x2="384.0" y2="293.5" stroke="#9a3444" stroke-width="1"/><line x1="478.0" y1="293.5" x2="480.5" y2="293.5" stroke="#9a3444" stroke-width="1"/><line x1="431.5" y1="326.0" x2="431.5" y2="327.5" stroke="#9a3444" stroke-width="1"/><line x1="428.0" y1="293.5" x2="436.0" y2="293.5" stroke="#9a3444" stroke-width="1"/><line x1="431.5" y1="290.0" x2="431.5" y2="298.0" stroke="#9a3444" stroke-width="1"/><rect x="609.25" y="370.25" width="10.5" height="29.5" fill="none" stroke="#9a3444" stroke-width="2"/><line x1="614.5" y1="370.5" x2="614.5" y2="369.0" stroke="#9a3444" stroke-width="1"/><line x1="614.5" y1="401.0" x2="614.5" y2="416.5" stroke="#9a3444" stroke-width="1"/><line x1="614.5" y1="416.5" x2="633.5" y2="416.5" stroke="#9a3444" stroke-width="1"/><line x1="611.5" y1="385.5" x2="618.5" y2="385.5" stroke="#9a3444" stroke-width="1"/><line x1="614.5" y1="382.5" x2="614.5" y2="389.5" stroke="#9a3444" stroke-width="1"/><rect x="645.5" y="400.5" width="151.5" height="258.5" fill="none" stroke="#9a3444" stroke-width="2"/><polygon points="636.6,410.7 641.0,410.7 644.6,414.3 644.6,418.7 641.0,422.3 636.6,422.3 633.0,418.7 633.0,414.3" fill="none" stroke="#9a3444" stroke-width="1"/><line x1="614.5" y1="462.5" x2="645.0" y2="462.5" stroke="#9a3444" stroke-width="1"/><line x1="614.5" y1="492.5" x2="645.0" y2="492.5" stroke="#9a3444" stroke-width="1"/><line x1="614.5" y1="523.5" x2="645.0" y2="523.5" stroke="#9a3444" stroke-width="1"/><line x1="614.5" y1="538.5" x2="645.0" y2="538.5" stroke="#9a3444" stroke-width="1"/><line x1="797.0" y1="416.5" x2="829.0" y2="416.5" stroke="#9a3444" stroke-width="1"/><line x1="797.0" y1="431.5" x2="829.0" y2="431.5" stroke="#9a3444" stroke-width="1"/><line x1="797.0" y1="446.5" x2="829.0" y2="446.5" stroke="#9a3444" stroke-width="1"/><line x1="797.0" y1="462.5" x2="829.0" y2="462.5" stroke="#9a3444" stroke-width="1"/><line x1="797.0" y1="477.5" x2="829.0" y2="477.5" stroke="#9a3444" stroke-width="1"/><line x1="797.0" y1="492.5" x2="829.0" y2="492.5" stroke="#9a3444" stroke-width="1"/><line x1="797.0" y1="508.5" x2="829.0" y2="508.5" stroke="#9a3444" stroke-width="1"/><line x1="797.0" y1="523.5" x2="829.0" y2="523.5" stroke="#9a3444" stroke-width="1"/><line x1="797.0" y1="554.5" x2="829.0" y2="554.5" stroke="#9a3444" stroke-width="1"/><line x1="797.0" y1="569.5" x2="829.0" y2="569.5" stroke="#9a3444" stroke-width="1"/><line x1="797.0" y1="584.5" x2="829.0" y2="584.5" stroke="#9a3444" stroke-width="1"/><line x1="797.0" y1="600.5" x2="829.0" y2="600.5" stroke="#9a3444" stroke-width="1"/><line x1="797.0" y1="615.5" x2="829.0" y2="615.5" stroke="#9a3444" stroke-width="1"/><line x1="797.0" y1="630.5" x2="829.0" y2="630.5" stroke="#9a3444" stroke-width="1"/><line x1="797.0" y1="645.5" x2="829.0" y2="645.5" stroke="#9a3444" stroke-width="1"/><line x1="718.5" y1="538.5" x2="725.5" y2="538.5" stroke="#9a3444" stroke-width="1"/><line x1="721.5" y1="535.5" x2="721.5" y2="542.5" stroke="#9a3444" stroke-width="1"/><rect x="874.25" y="518" width="30.75" height="10" fill="none" stroke="#9a3444" stroke-width="2"/><line x1="867.5" y1="523.5" x2="874.0" y2="523.5" stroke="#9a3444" stroke-width="1"/><line x1="905.0" y1="523.5" x2="913.5" y2="523.5" stroke="#9a3444" stroke-width="1"/><line x1="884.0" y1="523.5" x2="898.0" y2="523.5" stroke="#9a3444" stroke-width="1"/><line x1="888.5" y1="523.5" x2="895.5" y2="523.5" stroke="#9a3444" stroke-width="1"/><line x1="891.5" y1="520.5" x2="891.5" y2="527.5" stroke="#9a3444" stroke-width="1"/><line x1="1005.0" y1="492.0" x2="1005.0" y2="524.0" stroke="#9a3444" stroke-width="2"/><line x1="998.0" y1="523.5" x2="1005.0" y2="523.5" stroke="#9a3444" stroke-width="1"/><line x1="1012.0" y1="485.0" x2="1012.0" y2="500.0" stroke="#9a3444" stroke-width="2"/><line x1="1012.0" y1="503.0" x2="1012.0" y2="513.0" stroke="#9a3444" stroke-width="2"/><line x1="1012.0" y1="516.0" x2="1012.0" y2="531.0" stroke="#9a3444" stroke-width="2"/><line x1="1012.0" y1="492.5" x2="1043.5" y2="492.5" stroke="#9a3444" stroke-width="1"/><line x1="1012.0" y1="523.5" x2="1043.5" y2="523.5" stroke="#9a3444" stroke-width="1"/><polyline points="1009.0,507.5 1027.5,507.5 1027.5,523.5" fill="none" stroke="#9a3444" stroke-width="1" stroke-linejoin="miter"/><polyline points="1023.5,504.0 1016.5,507.5 1023.5,512.0" fill="none" stroke="#9a3444" stroke-width="2" stroke-linejoin="miter"/><rect x="1020.5" y="569.8" width="44.8" height="45.3" fill="none" stroke="#9a3444" stroke-width="3"/><polygon points="1050.1,578.3 1054.9,578.3 1058.7,582.1 1058.7,586.9 1054.9,590.7 1050.1,590.7 1046.3,586.9 1046.3,582.1" fill="none" stroke="#9a3444" stroke-width="1"/><polygon points="1050.1,593.3 1054.9,593.3 1058.7,597.1 1058.7,601.9 1054.9,605.7 1050.1,605.7 1046.3,601.9 1046.3,597.1" fill="none" stroke="#9a3444" stroke-width="1"/><line x1="1043.5" y1="584.5" x2="1046.5" y2="584.5" stroke="#9a3444" stroke-width="1"/><line x1="1043.5" y1="599.5" x2="1046.5" y2="599.5" stroke="#9a3444" stroke-width="1"/><line x1="1055.0" y1="599.5" x2="1062.0" y2="599.5" stroke="#9a3444" stroke-width="1"/><line x1="1043.5" y1="523.5" x2="1043.5" y2="691.5" stroke="#447c52" stroke-width="1"/><text x="157.0" y="262.8" font-size="15" fill="#3d874e" stroke="#fff" stroke-width="0.3" textLength="201.0" lengthAdjust="spacingAndGlyphs">12V Stromversorgung hier dran</text><line x1="151.5" y1="263.5" x2="158.5" y2="263.5" stroke="#3d874e" stroke-width="1"/><line x1="154.5" y1="260.5" x2="154.5" y2="267.5" stroke="#3d874e" stroke-width="1"/><text x="386.0" y="385.0" font-size="15" fill="#3d874e" stroke="#fff" stroke-width="0.3" textLength="36.0" lengthAdjust="spacingAndGlyphs">Minus</text><line x1="382.5" y1="385.5" x2="389.5" y2="385.5" stroke="#3d874e" stroke-width="1"/><line x1="385.5" y1="382.5" x2="385.5" y2="389.5" stroke="#3d874e" stroke-width="1"/><text x="585.0" y="324.5" font-size="15" fill="#3d874e" stroke="#fff" stroke-width="0.3" textLength="95.0" lengthAdjust="spacingAndGlyphs">5V für den AVR</text><line x1="581.5" y1="325.5" x2="588.5" y2="325.5" stroke="#3d874e" stroke-width="1"/><line x1="584.5" y1="322.5" x2="584.5" y2="329.5" stroke="#3d874e" stroke-width="1"/><text x="875.6" y="263.0" font-size="15" fill="#3d874e" stroke="#fff" stroke-width="0.3" textLength="141.4" lengthAdjust="spacingAndGlyphs">12V für den Transistor</text><line x1="871.5" y1="263.5" x2="878.5" y2="263.5" stroke="#3d874e" stroke-width="1"/><line x1="874.5" y1="260.5" x2="874.5" y2="267.5" stroke="#3d874e" stroke-width="1"/><text x="829.4" y="553.4" font-size="15" fill="#3d874e" stroke="#fff" stroke-width="0.3" textLength="195.0" lengthAdjust="spacingAndGlyphs">Schutzwiderstand für den AVR</text><line x1="825.5" y1="553.5" x2="832.5" y2="553.5" stroke="#3d874e" stroke-width="1"/><line x1="828.5" y1="550.5" x2="828.5" y2="557.5" stroke="#3d874e" stroke-width="1"/><text x="967.3" y="645.0" font-size="15" fill="#3d874e" stroke="#fff" stroke-width="0.3" textLength="230.6" lengthAdjust="spacingAndGlyphs">Hier schließt du den Verbraucher an</text><line x1="963.5" y1="645.5" x2="970.5" y2="645.5" stroke="#3d874e" stroke-width="1"/><line x1="966.5" y1="642.5" x2="966.5" y2="649.5" stroke="#3d874e" stroke-width="1"/><text x="224.0" y="274.0" font-size="15" fill="#808080" stroke="#fff" stroke-width="0.3" textLength="22.6" lengthAdjust="spacingAndGlyphs">JP1</text><text x="226.0" y="339.2" font-size="15" fill="#808080" stroke="#fff" stroke-width="0.3" textLength="22.5" lengthAdjust="spacingAndGlyphs">12V</text><text x="386.0" y="258.8" font-size="15" fill="#808080" stroke="#fff" stroke-width="0.3" textLength="20.3" lengthAdjust="spacingAndGlyphs">IC2</text><text x="386.0" y="273.6" font-size="15" fill="#808080" stroke="#fff" stroke-width="0.3" textLength="189.0" lengthAdjust="spacingAndGlyphs">7805 - Dein Spannungsregler</text><text x="347.3" y="306.0" font-size="15" fill="#808080" stroke="#fff" stroke-width="0.3" textLength="15.4" lengthAdjust="spacingAndGlyphs">C1</text><text x="348.0" y="336.0" font-size="15" fill="#808080" stroke="#fff" stroke-width="0.3" textLength="59.0" lengthAdjust="spacingAndGlyphs">10µF 35V</text><text x="399.3" y="298.0" font-size="13" fill="#808080" stroke="#fff" stroke-width="0.3" textLength="9.1" lengthAdjust="spacingAndGlyphs">VI</text><text x="445.7" y="298.0" font-size="13" fill="#808080" stroke="#fff" stroke-width="0.3" textLength="15.3" lengthAdjust="spacingAndGlyphs">VO</text><text x="419.0" y="318.5" font-size="13" fill="#808080" stroke="#fff" stroke-width="0.3" textLength="25.3" lengthAdjust="spacingAndGlyphs">GND</text><text x="376.8" y="290.4" font-size="11" fill="#808080" stroke="#fff" stroke-width="0.3">1</text><text x="480.0" y="290.4" font-size="11" fill="#808080" stroke="#fff" stroke-width="0.3">3</text><text x="420.5" y="326.5" font-size="11" fill="#808080" stroke="#fff" stroke-width="0.3" transform="rotate(90 420.5 326.5)">2</text><text x="605.0" y="407.0" font-size="15" fill="#808080" stroke="#fff" stroke-width="0.3" textLength="17.1" lengthAdjust="spacingAndGlyphs" transform="rotate(-90 605.0 407.0)">R2</text><text x="634.0" y="414.0" font-size="15" fill="#808080" stroke="#fff" stroke-width="0.3" textLength="61.4" lengthAdjust="spacingAndGlyphs" transform="rotate(-90 634.0 414.0)">10kOhm</text><text x="646.0" y="396.0" font-size="15" fill="#808080" stroke="#fff" stroke-width="0.3" textLength="18.3" lengthAdjust="spacingAndGlyphs">IC1</text><text x="659.6" y="420.0" font-size="12.5" fill="#808080" stroke="#fff" stroke-width="0.3" textLength="38.9" lengthAdjust="spacingAndGlyphs">RESET</text><text x="659.6" y="466.0" font-size="12.5" fill="#808080" stroke="#fff" stroke-width="0.3" textLength="32.8" lengthAdjust="spacingAndGlyphs">XTAL2</text><text x="659.6" y="496.0" font-size="12.5" fill="#808080" stroke="#fff" stroke-width="0.3" textLength="32.0" lengthAdjust="spacingAndGlyphs">XTAL1</text><text x="659.6" y="527.0" font-size="12.5" fill="#808080" stroke="#fff" stroke-width="0.3" textLength="24.0" lengthAdjust="spacingAndGlyphs">VCC</text><text x="659.6" y="542.0" font-size="12.5" fill="#808080" stroke="#fff" stroke-width="0.3" textLength="25.0" lengthAdjust="spacingAndGlyphs">GND</text><text x="728.8" y="420.0" font-size="12.5" fill="#808080" stroke="#fff" stroke-width="0.3" textLength="54.5" lengthAdjust="spacingAndGlyphs">(SCK)PB7</text><text x="724.9" y="435.0" font-size="12.5" fill="#808080" stroke="#fff" stroke-width="0.3" textLength="58.3" lengthAdjust="spacingAndGlyphs">(MISO)PB6</text><text x="724.9" y="450.0" font-size="12.5" fill="#808080" stroke="#fff" stroke-width="0.3" textLength="58.3" lengthAdjust="spacingAndGlyphs">(MOSI)PB5</text><text x="761.6" y="466.0" font-size="12.5" fill="#808080" stroke="#fff" stroke-width="0.3" textLength="21.6" lengthAdjust="spacingAndGlyphs">PB4</text><text x="732.8" y="481.0" font-size="12.5" fill="#808080" stroke="#fff" stroke-width="0.3" textLength="50.4" lengthAdjust="spacingAndGlyphs">(OCI)PB3</text><text x="761.7" y="496.0" font-size="12.5" fill="#808080" stroke="#fff" stroke-width="0.3" textLength="21.5" lengthAdjust="spacingAndGlyphs">PB2</text><text x="727.7" y="512.0" font-size="12.5" fill="#808080" stroke="#fff" stroke-width="0.3" textLength="54.5" lengthAdjust="spacingAndGlyphs">(AIN1)PB1</text><text x="727.7" y="527.0" font-size="12.5" fill="#808080" stroke="#fff" stroke-width="0.3" textLength="55.5" lengthAdjust="spacingAndGlyphs">(AIN0)PB0</text><text x="732.8" y="558.0" font-size="12.5" fill="#808080" stroke="#fff" stroke-width="0.3" textLength="50.4" lengthAdjust="spacingAndGlyphs">(ICP)PD6</text><text x="738.7" y="573.0" font-size="12.5" fill="#808080" stroke="#fff" stroke-width="0.3" textLength="44.5" lengthAdjust="spacingAndGlyphs">(T1)PD5</text><text x="738.7" y="588.0" font-size="12.5" fill="#808080" stroke="#fff" stroke-width="0.3" textLength="44.5" lengthAdjust="spacingAndGlyphs">(T0)PD4</text><text x="726.9" y="604.0" font-size="12.5" fill="#808080" stroke="#fff" stroke-width="0.3" textLength="56.3" lengthAdjust="spacingAndGlyphs">(INT1)PD3</text><text x="726.9" y="619.0" font-size="12.5" fill="#808080" stroke="#fff" stroke-width="0.3" textLength="56.3" lengthAdjust="spacingAndGlyphs">(INT0)PD2</text><text x="730.0" y="634.0" font-size="12.5" fill="#808080" stroke="#fff" stroke-width="0.3" textLength="52.2" lengthAdjust="spacingAndGlyphs">(TXD)PD1</text><text x="728.5" y="649.0" font-size="12.5" fill="#808080" stroke="#fff" stroke-width="0.3" textLength="54.7" lengthAdjust="spacingAndGlyphs">(RXD)PD0</text><text x="826.0" y="414.0" font-size="11" fill="#808080" stroke="#fff" stroke-width="0.3" text-anchor="end">19</text><text x="826.0" y="429.0" font-size="11" fill="#808080" stroke="#fff" stroke-width="0.3" text-anchor="end">18</text><text x="826.0" y="444.0" font-size="11" fill="#808080" stroke="#fff" stroke-width="0.3" text-anchor="end">17</text><text x="826.0" y="460.0" font-size="11" fill="#808080" stroke="#fff" stroke-width="0.3" text-anchor="end">16</text><text x="826.0" y="475.0" font-size="11" fill="#808080" stroke="#fff" stroke-width="0.3" text-anchor="end">15</text><text x="826.0" y="490.0" font-size="11" fill="#808080" stroke="#fff" stroke-width="0.3" text-anchor="end">14</text><text x="826.0" y="506.0" font-size="11" fill="#808080" stroke="#fff" stroke-width="0.3" text-anchor="end">13</text><text x="826.0" y="521.0" font-size="11" fill="#808080" stroke="#fff" stroke-width="0.3" text-anchor="end">12</text><text x="826.0" y="552.0" font-size="11" fill="#808080" stroke="#fff" stroke-width="0.3" text-anchor="end">11</text><text x="826.0" y="567.0" font-size="11" fill="#808080" stroke="#fff" stroke-width="0.3" text-anchor="end">9</text><text x="826.0" y="582.0" font-size="11" fill="#808080" stroke="#fff" stroke-width="0.3" text-anchor="end">8</text><text x="826.0" y="598.0" font-size="11" fill="#808080" stroke="#fff" stroke-width="0.3" text-anchor="end">7</text><text x="826.0" y="613.0" font-size="11" fill="#808080" stroke="#fff" stroke-width="0.3" text-anchor="end">6</text><text x="826.0" y="628.0" font-size="11" fill="#808080" stroke="#fff" stroke-width="0.3" text-anchor="end">3</text><text x="826.0" y="643.0" font-size="11" fill="#808080" stroke="#fff" stroke-width="0.3" text-anchor="end">2</text><text x="631.0" y="460.0" font-size="11" fill="#808080" stroke="#fff" stroke-width="0.3" text-anchor="end">4</text><text x="631.0" y="490.0" font-size="11" fill="#808080" stroke="#fff" stroke-width="0.3" text-anchor="end">5</text><text x="631.0" y="521.0" font-size="11" fill="#808080" stroke="#fff" stroke-width="0.3" text-anchor="end">20</text><text x="631.0" y="536.0" font-size="11" fill="#808080" stroke="#fff" stroke-width="0.3" text-anchor="end">10</text><text x="645.0" y="676.0" font-size="15" fill="#808080" stroke="#fff" stroke-width="0.3" textLength="291.0" lengthAdjust="spacingAndGlyphs">AT90S2313P - War jetzt nur ein Beispiel-AVR</text><text x="867.8" y="513.5" font-size="15" fill="#808080" stroke="#fff" stroke-width="0.3" textLength="16.0" lengthAdjust="spacingAndGlyphs">R1</text><text x="868.4" y="543.0" font-size="15" fill="#808080" stroke="#fff" stroke-width="0.3" textLength="50.0" lengthAdjust="spacingAndGlyphs">1 kOhm</text><text x="943.8" y="491.6" font-size="15" fill="#808080" stroke="#fff" stroke-width="0.3" textLength="16.9" lengthAdjust="spacingAndGlyphs">Q1</text><text x="943.8" y="506.6" font-size="15" fill="#808080" stroke="#fff" stroke-width="0.3" textLength="53.5" lengthAdjust="spacingAndGlyphs">IRF540 -</text><text x="1035.6" y="506.6" font-size="15" fill="#808080" stroke="#fff" stroke-width="0.3" textLength="98.4" lengthAdjust="spacingAndGlyphs">Dein Transistor</text><text x="1020.0" y="564.6" font-size="15" fill="#808080" stroke="#fff" stroke-width="0.3" textLength="24.0" lengthAdjust="spacingAndGlyphs">JP2</text><text x="1020.0" y="630.0" font-size="15" fill="#808080" stroke="#fff" stroke-width="0.3" textLength="78.3" lengthAdjust="spacingAndGlyphs">Verbraucher</text><text x="1037.0" y="582.0" font-size="11" fill="#808080" stroke="#fff" stroke-width="0.3">1</text><text x="1037.0" y="597.5" font-size="11" fill="#808080" stroke="#fff" stroke-width="0.3">2</text><rect x="238" y="798" width="1" height="1" fill="#000"/><rect x="240" y="798" width="1" height="1" fill="#000"/><rect x="242" y="798" width="1" height="1" fill="#000"/><rect x="244" y="798" width="1" height="1" fill="#000"/><rect x="246" y="798" width="1" height="1" fill="#000"/><rect x="250" y="798" width="1" height="1" fill="#000"/><rect x="252" y="798" width="1" height="1" fill="#000"/><rect x="254" y="798" width="1" height="1" fill="#000"/><rect x="256" y="798" width="1" height="1" fill="#000"/><rect x="258" y="798" width="1" height="1" fill="#000"/><rect x="247" y="788" width="1" height="1" fill="#000"/><rect x="247" y="790" width="1" height="1" fill="#000"/><rect x="247" y="792" width="1" height="1" fill="#000"/><rect x="247" y="794" width="1" height="1" fill="#000"/><rect x="247" y="796" width="1" height="1" fill="#000"/><rect x="247" y="800" width="1" height="1" fill="#000"/><rect x="247" y="802" width="1" height="1" fill="#000"/><rect x="247" y="804" width="1" height="1" fill="#000"/><rect x="247" y="806" width="1" height="1" fill="#000"/><rect x="247" y="808" width="1" height="1" fill="#000"/><rect x="247" y="810" width="1" height="1" fill="#000"/></svg>
</body></html>
